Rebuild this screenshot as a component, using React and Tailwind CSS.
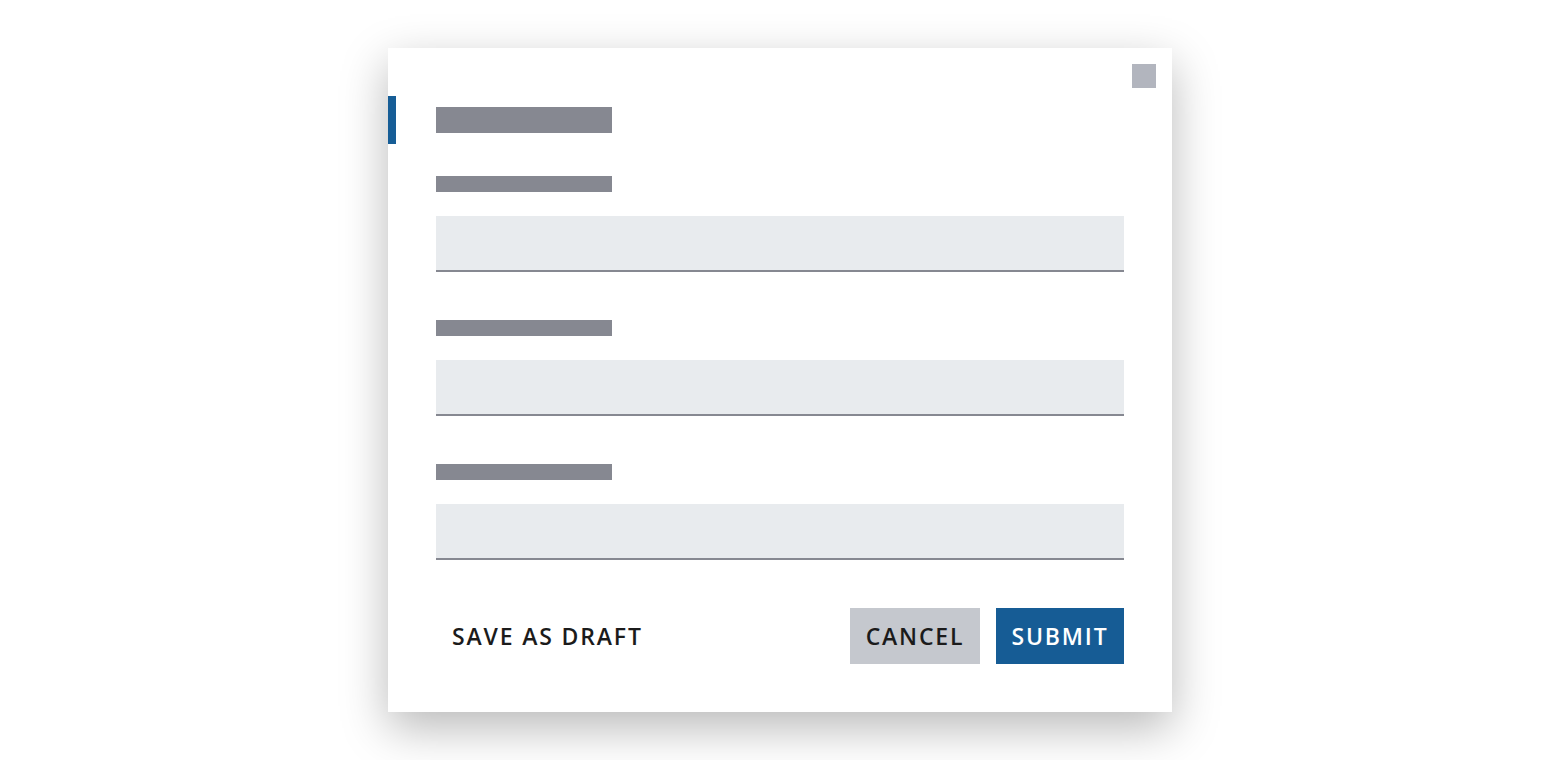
import React from 'react';

const fields = [1, 2, 3];

function Field() {
    return (
        <div className="flex flex-col">
            <div className="h-4 w-[176px] bg-[#868891]" />
            <div className="mt-6 h-14 w-full bg-[#e8ebee] border-b-2 border-[#868891]" />
        </div>
    );
}

export default function App() {
    return (
        <div className="w-full h-[760px] bg-white flex items-center justify-center" style={{ fontFamily: '"Open Sans", "Noto Sans", sans-serif' }}>
            {/* Dialog */}
            <div className="relative w-[784px] h-[664px] bg-white shadow-[0_16px_44px_rgba(0,0,0,0.28)] px-12 pt-12 pb-12 flex flex-col">
                <button className="absolute top-4 right-4 w-6 h-6 bg-[#b2b5be]" aria-label="Close" />

                {/* Header */}
                <div className="relative h-12 flex items-center">
                    <div className="absolute -left-12 top-0 w-2 h-12 bg-[#165d96]" />
                    <div className="h-[26px] w-[176px] bg-[#868891]" />
                </div>

                <div className="mt-8 flex flex-col gap-12">
                    {fields.map((f) => (
                        <Field key={f} />
                    ))}
                </div>

                {/* Footer */}
                <div className="mt-12 flex items-center">
                    <button className="h-14 px-4 text-[23px] tracking-[0.08em] text-[#1b1b1b] font-semibold">
                        SAVE AS DRAFT
                    </button>
                    <div className="ml-auto flex gap-4">
                        <button className="h-14 w-[130px] bg-[#c5c8ce] text-[23px] tracking-[0.08em] text-[#1b1b1b] font-semibold">
                            CANCEL
                        </button>
                        <button className="h-14 w-[128px] bg-[#165c95] text-[23px] tracking-[0.08em] text-white font-semibold">
                            SUBMIT
                        </button>
                    </div>
                </div>
            </div>
        </div>
    );
}
